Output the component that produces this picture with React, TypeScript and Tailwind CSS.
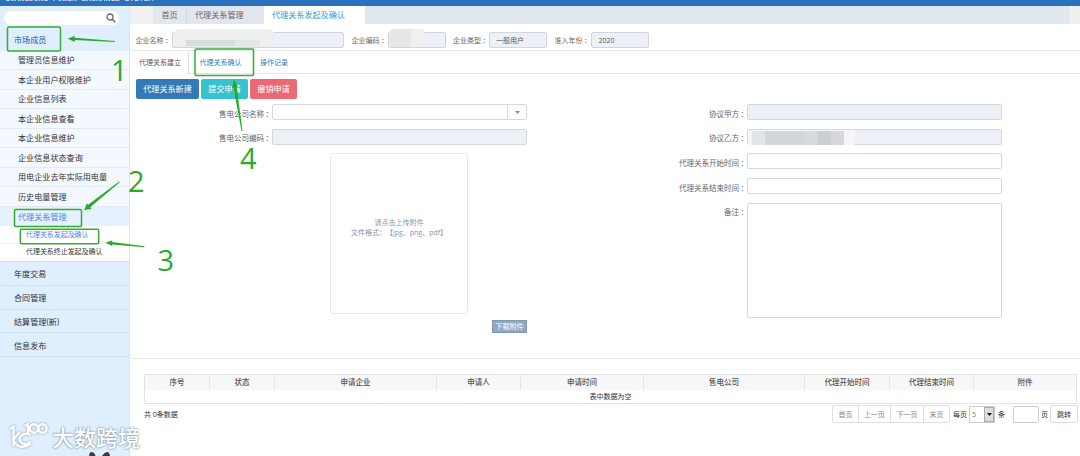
import React from "react";

const subMenu = ["管理员信息维护", "本企业用户权限维护", "企业信息列表", "本企业信息查看", "本企业信息维护", "企业信息状态查询", "用电企业去年实际用电量", "历史电量管理"];
const mainMenu = ["年度交易", "合同管理", "结算管理(新)", "信息发布"];
const columns = ["序号", "状态", "申请企业", "申请人", "申请时间", "售电公司", "代理开始时间", "代理结束时间", "附件"];

function Field({ label, className = "", tall = false, children }: { label: string; className?: string; tall?: boolean; children?: React.ReactNode }) {
  return (
    <div className="flex">
      <div className="flex w-[80px] shrink-0 justify-end pt-[4.5px] text-[7.5px] leading-[10px] text-[#666]">
        <span>{label}</span>
        <span className="w-[8px] pl-[1.5px]">：</span>
      </div>
      <div className={`flex w-[255px] rounded-[2px] border border-[#d3dade] ${tall ? "h-[115px]" : "h-[16px]"} ${className}`}>{children}</div>
    </div>
  );
}

function Info({ label, width, gap, children }: { label: string; width: string; gap: string; children?: React.ReactNode }) {
  return (
    <div className={`flex items-center ${gap}`}>
      <span className="flex w-[36px] shrink-0 pt-px text-[7px] text-[#666]">
        <span>{label}</span>
        <span className="pl-[1.5px]">：</span>
      </span>
      <div className={`flex h-[16px] items-center rounded-[2px] border border-[#d0d5de] bg-[#edf0f6] text-[7px] text-[#555] ${width}`}>{children}</div>
    </div>
  );
}

function Sidebar() {
  return (
    <aside className="flex w-[130px] shrink-0 flex-col border-r border-[#dde6f0] bg-[#dfeffe] text-[8.1px] text-[#333]">
      <div className="flex h-[22px] items-center px-1">
        <div className="mt-px flex h-[14px] w-[115px] items-center justify-end rounded-full bg-white pr-[3px]">
          <svg width="10" height="10" viewBox="0 0 10 10" fill="none" stroke="#666">
            <circle cx="4" cy="4" r="3" strokeWidth="1.3" />
            <path d="M6.3 6.3 9.2 9.2" strokeWidth="1.6" />
          </svg>
        </div>
      </div>
      <div className="flex h-[22.5px] items-center pt-px pl-[14px] text-[#1b4fb0]">市场成员</div>
      {subMenu.map((t) => (
        <div key={t} className="flex h-[19.5px] items-center border-b border-[#e2ebf5] bg-[#f3f9ff] pt-[1.5px] pl-[18px]">{t}</div>
      ))}
      <div className="flex h-[19.5px] items-center bg-[#e6f1fe] pt-px pl-[18px] text-[#4d85f0]">代理关系管理</div>
      <div className="flex h-[17.5px] items-center border-b border-[#edf1f5] bg-white pt-[1.5px] pl-[26px] text-[6.95px] text-[#4d85f0]">代理关系发起及确认</div>
      <div className="flex h-[18.5px] items-center border-b border-[#d0e0ef] bg-white pt-px pl-[26px] text-[6.95px]">代理关系终止发起及确认</div>
      {mainMenu.map((t) => (
        <div key={t} className="flex h-[23.8px] items-center border-b border-[#cfe1f2] pt-[2px] pl-[14px]">{t}</div>
      ))}
    </aside>
  );
}

function Pagination() {
  return (
    <div className="-mr-px flex h-[18px] items-center text-[7px] text-[#333]">
      <div className="flex h-[18px] divide-x divide-[#e0e0e0] rounded-[2px] border border-[#e0e0e0] text-[#888]">
        <span className="flex w-[26px] items-center justify-center">首页</span>
        <span className="flex w-[32px] items-center justify-center">上一页</span>
        <span className="flex w-[33px] items-center justify-center">下一页</span>
        <span className="flex w-[25px] items-center justify-center">末页</span>
      </div>
      <span className="ml-[3px] w-[16px] pt-px">每页</span>
      <div className="flex h-[17px] w-[26px] items-center justify-between border border-[#ccc] pl-[2px]">
        <span className="text-[#777]">5</span>
        <span className="flex h-full w-[10px] items-center justify-center border border-[#aaa] bg-[#dedede]">
          <svg width="5" height="3"><path d="M0 0h5L2.5 3z" fill="#111" /></svg>
        </span>
      </div>
      <span className="ml-[3px] w-[15px] pt-px">条</span>
      <div className="h-[17px] w-[26px] rounded-[2px] border border-[#ccc]" />
      <span className="ml-[2px] w-[9px] pt-px">页</span>
      <div className="flex h-[18px] w-[28px] items-center justify-center rounded-[2px] border border-[#ddd]">跳转</div>
    </div>
  );
}

function Annotations() {
  return (
    <div className="pointer-events-none absolute inset-0 font-['Open_Sans'] text-[29px] leading-[20px] text-[#2aaa2a]">
      <svg className="absolute inset-0" width="1080" height="456" viewBox="0 0 1080 456">
        <g fill="none" stroke="#35ad35" strokeWidth="1.5">
          <rect x="7.5" y="27" width="53" height="24" rx="1.5" />
          <rect x="14.5" y="209.5" width="67" height="17" rx="1.5" />
          <rect x="20.3" y="229.3" width="78.4" height="14.4" rx="1.5" />
          <rect x="195" y="49" width="58.5" height="26.5" rx="1.5" />
        </g>
        <g fill="#2aaa2a">
          <path d="M67.8 38.7 75 35.8 74.3 37.8 115 41 115 42 74.6 40.1 75 42Z" />
          <path d="M84 210 87 203.2 88.1 204.8 119.2 181.5 119.8 182.2 90.4 207 91.5 209Z" />
          <path d="M105.5 242.7 112.5 240.2 112 242 144.5 246.2 144.4 247.2 112 244.5 112.2 246Z" />
          <path d="M234 79 238.2 87.5 236.6 87 242.5 131 241.5 131 233.5 87.8 232 88Z" />
        </g>
      </svg>
      <div className="absolute top-[60px] left-[111px]">1</div>
      <div className="absolute top-[171px] left-[128px]">2</div>
      <div className="absolute top-[249.5px] left-[157.5px]">3</div>
      <div className="absolute top-[148px] left-[240px]">4</div>
    </div>
  );
}

function Watermark() {
  return (
    <div className="absolute top-[420px] left-[8px] flex h-[36px] w-[140px]">
      <svg className="absolute inset-0 drop-shadow-[0_0_1px_#8395a5]" width="140" height="36" fill="none" stroke="#fff" strokeWidth="2.4" strokeLinecap="round" strokeLinejoin="round">
        <path d="M2.5 8.5 5.5 6.5V25" />
        <path d="M11 13 5.5 19.5M21.5 14C14 12.5 10 17 12.5 21.5 14.5 25 19 25 22 22M5.5 20.5C9 27.5 16 28.5 22 24" />
        <path d="M17.5 5.5 20 4V13" />
        <circle cx="26" cy="8.5" r="4.2" />
        <circle cx="34.5" cy="8.5" r="4.2" />
      </svg>
      <svg className="absolute top-[32px] left-[72px]" width="32" height="4" fill="#45384b">
        <path d="M9 4Q9.500 0 11.500 0 15 0.500 15.500 4zM22 4Q24 0.500 27 0 29.500 0 30 4z" />
      </svg>
      <div className="absolute top-[2px] left-[44px] text-[22px] leading-[30px] font-medium whitespace-nowrap text-white [text-shadow:0_0_2px_#8395a5,0_0_2px_#8395a5]">大数跨境</div>
    </div>
  );
}

export default function App() {
  return (
    <div className="relative flex h-[456px] w-[1080px] flex-col overflow-hidden bg-white font-['Open_Sans','Noto_Sans_CJK_SC',sans-serif] leading-none whitespace-nowrap" lang="zh-CN">
      <header className="flex h-[6px] shrink-0 items-end overflow-hidden bg-[#2a70bd] pb-[3px] pl-[5px]">
        <span className="font-['Liberation_Mono'] text-[8px] tracking-[-0.02px] text-white">GUANGDONG POWER EXCHANGE SYSTEM</span>
      </header>
      <div className="flex min-h-0 flex-1">
        <Sidebar />
        <main className="flex min-w-0 flex-1 flex-col">
          <nav className="flex h-[18px] shrink-0 bg-[#e2e6ee] text-[8.1px] text-[#666]">
            <div className="w-[23px] bg-[#f0f0f0]" />
            <div className="flex w-[34px] items-center justify-center border-r border-[#d3d7df] pt-px">首页</div>
            <div className="flex w-[77px] items-center pt-px pl-[8px]">代理关系管理</div>
            <div className="flex w-[101px] items-center bg-white pt-px pl-[8px] text-[#2b9bd5]">代理关系发起及确认</div>
            <div className="ml-auto w-[10px] border-l border-[#f8f8f8] bg-[#efefef]" />
          </nav>
          <section className="flex h-[27px] shrink-0 items-center border-b border-[#e9e9e9] pt-[5px] pl-[5.5px]">
            <Info label="企业名称" width="w-[172px]" gap="">
              <div className="-mt-1 ml-px h-[18px] w-[100px] overflow-hidden rounded-[5px] bg-[#eeeff0]">
                <div className="mt-[11px] ml-[12px] flex h-[6px]"><i className="w-[49px] bg-[#d6dedb]" /><i className="w-[25px] bg-[#e2e6e5]" /></div>
              </div>
            </Info>
            <Info label="企业编码" width="w-[58px]" gap="ml-[8px]">
              <div className="-mt-1 flex h-[18px] w-[36px] overflow-hidden rounded-[5px] bg-[#f0f0f0]"><i className="w-[22px] bg-[#e7e7e8]" /></div>
            </Info>
            <Info label="企业类型" width="w-[58px] pt-px pl-[6px]" gap="ml-[7.5px]">一般用户</Info>
            <Info label="准入年份" width="w-[58px] pt-px pl-[7px]" gap="ml-[7.5px]">2020</Info>
          </section>
          <div className="flex h-[23px] shrink-0 text-[7px] text-[#337ab7]">
            <div className="flex w-[59px] items-center rounded-tr-[2px] border-r border-[#ddd] pl-[9px] text-[#555]">代理关系建立</div>
            <div className="flex flex-1 items-center border-b border-[#e4e4e4] pl-[10.5px]">
              <span className="w-[60.5px]">代理关系确认</span>
              <span>操作记录</span>
            </div>
          </div>
          <div className="flex h-[25px] shrink-0 gap-[2px] pt-[5px] pl-[6px] text-[8.1px] text-white">
            <div className="flex h-[20px] w-[63px] items-center justify-center rounded-[2px] bg-[#337ab7] pt-px">代理关系新建</div>
            <div className="flex h-[20px] w-[47px] items-center justify-center rounded-[2px] bg-[#36c3cf] pt-px">提交申请</div>
            <div className="flex h-[20px] w-[47px] items-center justify-center rounded-[2px] bg-[#ec6974] pt-px">撤销申请</div>
          </div>
          <section className="flex h-[260px] shrink-0 border-b border-[#e8e8e8] pt-[5px] pl-[62px]">
            <div className="flex w-[475px] flex-col gap-[8.5px]">
              <Field label="售电公司名称">
                <div className="flex-1 border-r border-[#d3dade]" />
                <div className="flex w-[18px] items-center justify-center"><svg width="5" height="3"><path d="M0 0h5L2.5 3z" fill="#7890b0" /></svg></div>
              </Field>
              <Field label="售电公司编码" className="bg-[#edf0f6]" />
              <div className="ml-[138px] flex h-[161px] w-[138px] flex-col items-center rounded-[3px] border border-[#e7e9eb] pt-[63.5px] text-[7px] leading-[10.5px] text-[#8795b2] [text-spacing-trim:space-all]">
                <span>请点击上传附件</span>
                <span>文件格式：【jpg、png、pdf】</span>
              </div>
              <div className="-mt-[3px] ml-[300px] flex h-[13px] w-[35px] items-center justify-center border border-[#8298b2] bg-[#91a9c4] text-[7px] text-white">下载附件</div>
            </div>
            <div className="flex flex-col gap-[8.7px]">
              <Field label="协议甲方" className="bg-[#edf0f6]" />
              <Field label="协议乙方" className="bg-[#edf0f6]">
                <div className="flex h-[15px] w-[107px] bg-[#f3f5f8] pt-[1.5px] pl-[4px]">
                  <i className="w-[13px] bg-[#e1e5e9]" /><i className="w-[40px] bg-[#d3d7da]" /><i className="w-[13px] bg-[#d7dadd]" /><i className="w-[13px] bg-[#cccfd2]" /><i className="w-[13px] bg-[#d5d8dc]" />
                </div>
              </Field>
              <Field label="代理关系开始时间" />
              <Field label="代理关系结束时间" />
              <Field label="备注" tall />
            </div>
          </section>
          <section className="ml-[14px] w-[933px] pt-[15px]">
            <div className="border border-[#e4e4e4]">
              <div className="grid h-[15px] grid-cols-[65px_65px_162px_84px_123px_161px_85px_84px_1fr] divide-x divide-[#e6e6e6] bg-[#f8f8f8] text-[7.5px] font-medium text-[#555]">
                {columns.map((c) => <div key={c} className="flex items-center justify-center pt-px">{c}</div>)}
              </div>
              <div className="flex h-[13px] items-center justify-center text-[7px] text-[#333]">表中数据为空</div>
            </div>
            <div className="flex items-center justify-between pt-px">
              <span className="text-[7px] text-[#333]">共 0条数据</span>
              <Pagination />
            </div>
          </section>
        </main>
      </div>
      <Annotations />
      <Watermark />
    </div>
  );
}
